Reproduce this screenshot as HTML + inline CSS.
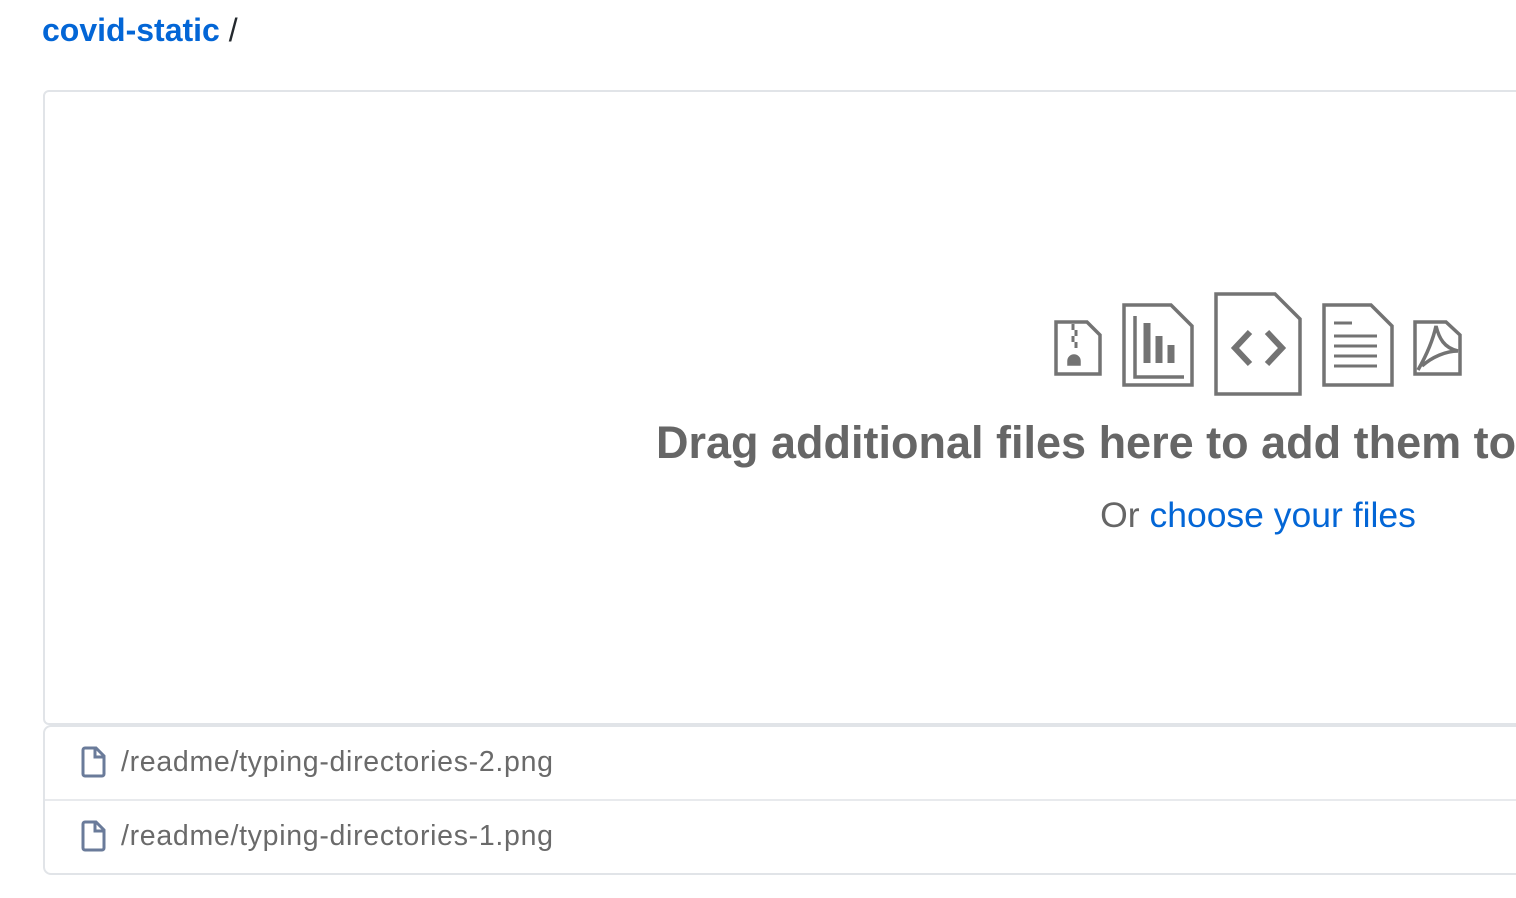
<!DOCTYPE html>
<html><head><meta charset="utf-8"><style>
html,body{margin:0;padding:0;background:#fff;width:1516px;height:898px;overflow:hidden;font-family:"Liberation Sans",sans-serif;}
#wrap{position:absolute;left:0;top:0;width:1516px;height:898px;overflow:hidden}
.crumb{position:absolute;left:42px;top:12px;font-size:32px;color:#24292e;white-space:nowrap}
.crumb b{color:#0366d6}
.box{position:absolute;left:43px;top:90px;width:1560px;height:631px;border:2px solid #e1e4e8;border-radius:6px;}
.list{position:absolute;left:43px;top:725px;width:1560px;height:146px;border:2px solid #e1e4e8;border-radius:8px;}
.row{position:absolute;left:0;height:72px;width:100%;font-size:28.5px;color:#6a6a6a;}
.row span{position:absolute;left:76px;top:19px;white-space:nowrap;letter-spacing:0.7px}
.row svg{position:absolute;left:35px;top:19px}
h1{position:absolute;left:656px;top:417px;margin:0;font-size:45px;font-weight:bold;color:#666;white-space:nowrap;letter-spacing:0px}
.or{position:absolute;left:1058px;width:400px;text-align:center;top:495px;font-size:35.5px;color:#666;white-space:nowrap}
.or a{color:#0366d6;text-decoration:none}
</style></head><body><div id="wrap">
<div class="crumb"><b>covid-static</b> /</div>
<div class="box"></div>
<svg style="position:absolute;left:0;top:0" width="1516" height="898" fill="none" stroke="#737373" stroke-width="3.5">
 <path d="M1056 322h31l13 13v39h-44z"/>
 <path d="M1073 324v6M1076 330v6M1073 336v6M1076 342v6" stroke-width="3"/>
 <path d="M1069 361a5 5 0 0 1 10 0v3h-10z" fill="#737373"/>
 <path d="M1124 305h47l21 21v59h-68z"/>
 <path d="M1135 316v61h49"/>
 <path d="M1147 323v40M1159 336v27M1171 345v18" stroke-width="7"/>
 <path d="M1216 294h59l25 25v75h-84z"/>
 <path d="M1250 332l-15 16 15 16M1267 332l15 16-15 16" stroke-width="6"/>
 <path d="M1324 305h47l21 21v59h-68z"/>
 <path d="M1334 323h18M1334 336h43M1334 346h43M1334 356h43M1334 366h43" stroke-width="3"/>
 <path d="M1415 322h31l14 13v39h-45z"/>
 <path d="M1418 370c8-14 15-30 18-44 3 12 8 22 22 25-12 0-26 6-36 15" stroke-width="3.5"/>
</svg>
<h1>Drag additional files here to add them to your repository</h1>
<div class="or">Or <a>choose your files</a></div>
<div class="list">
 <div class="row" style="top:0;border-bottom:2px solid #e8eaed;"><svg width="26" height="32" viewBox="0 0 26 32" fill="none" stroke="#6a7b9a" stroke-width="3"><path d="M3 4a2 2 0 0 1 2-2h11l8 8v18a2 2 0 0 1-2 2H5a2 2 0 0 1-2-2z"/><path d="M15 2v9h9" /></svg><span>/readme/typing-directories-2.png</span></div>
 <div class="row" style="top:74px"><svg width="26" height="32" viewBox="0 0 26 32" fill="none" stroke="#6a7b9a" stroke-width="3"><path d="M3 4a2 2 0 0 1 2-2h11l8 8v18a2 2 0 0 1-2 2H5a2 2 0 0 1-2-2z"/><path d="M15 2v9h9" /></svg><span>/readme/typing-directories-1.png</span></div>
</div>
</div></body></html>
